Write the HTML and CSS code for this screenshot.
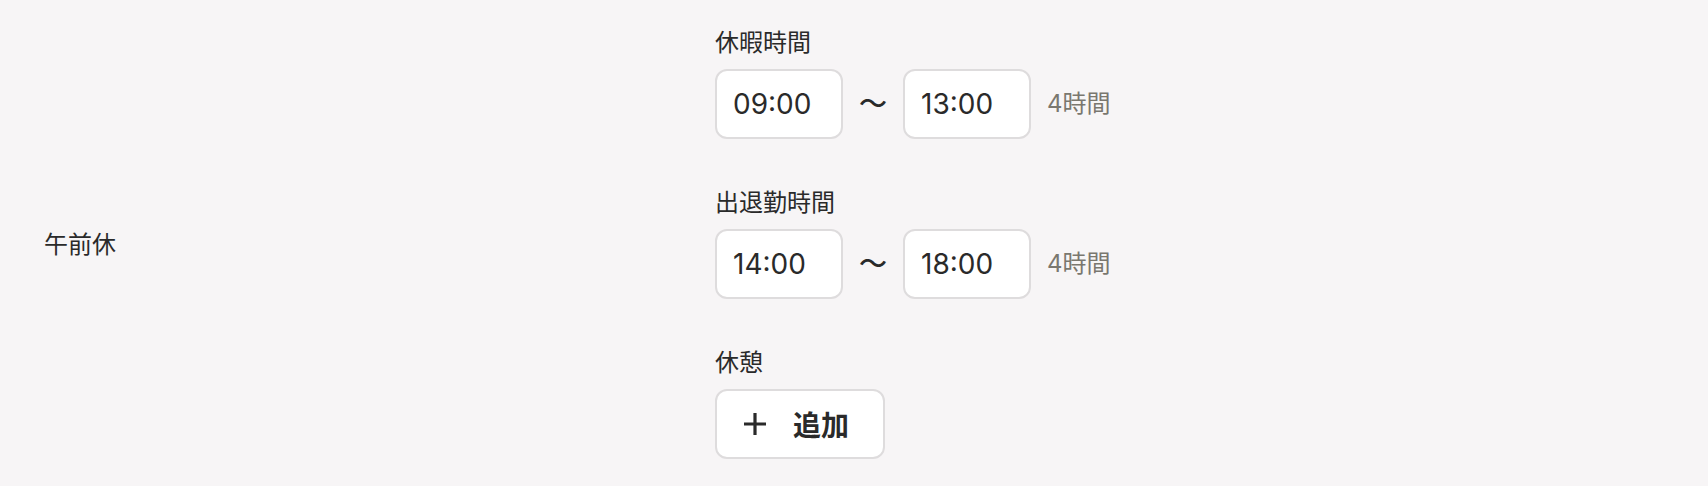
FILE: index.html
```html
<!DOCTYPE html>
<html lang="ja">
<head>
    <meta charset="UTF-8">
    <meta name="viewport" content="width=device-width, initial-scale=1.0">
    <title>午前休</title>
    <link rel="stylesheet" href="styles.css">
</head>
<body>

    <!-- 休暇の種類ごとの行 -->
    <div class="leave-row">
        <div class="leave-type">午前休</div>

        <div class="leave-fields">
            <!-- 休暇時間 -->
            <div class="field">
                <div class="field-label">休暇時間</div>
                <div class="time-range">
                    <div class="time-box">09:00</div>
                    <span class="tilde">〜</span>
                    <div class="time-box">13:00</div>
                    <span class="duration">4時間</span>
                </div>
            </div>

            <!-- 出退勤時間 -->
            <div class="field">
                <div class="field-label">出退勤時間</div>
                <div class="time-range">
                    <div class="time-box">14:00</div>
                    <span class="tilde">〜</span>
                    <div class="time-box">18:00</div>
                    <span class="duration">4時間</span>
                </div>
            </div>

            <!-- 休憩 -->
            <div class="field">
                <div class="field-label">休憩</div>
                <button class="add-button">
                    <svg class="plus-icon" width="24" height="24" viewBox="0 0 24 24" fill="none" stroke="currentColor" stroke-width="3.2">
                        <path d="M12 1v22M1 12h22"/>
                    </svg>
                    <span>追加</span>
                </button>
            </div>
        </div>
    </div>

</body>
</html>
```

FILE: styles.css
```css
body {
    font-family: Inter, "Noto Sans CJK JP", sans-serif;
    margin: 0;
    padding: 0;
    background-color: #f7f5f6;
    color: #2a2a2a;
}

/* 行全体 */
.leave-row {
    display: flex;
    align-items: center;
    padding: 25px 0 26px 44px;
}

.leave-type {
    width: 671px;
    margin-top: 6px;
    font-size: 24px;
    line-height: 36px;
}

/* 右側の入力欄 */
.leave-fields {
    display: flex;
    flex-direction: column;
    gap: 46px;
}

.field-label {
    font-size: 24px;
    line-height: 36px;
    margin-bottom: 8px;
}

.time-range {
    display: flex;
    align-items: center;
    gap: 16px;
}

.time-box {
    width: 128px;
    height: 70px;
    box-sizing: border-box;
    display: flex;
    align-items: center;
    padding: 0 16px;
    background-color: #fff;
    border: 2px solid #dedcdd;
    border-radius: 12px;
    font-size: 28px;
}

.tilde {
    font-size: 28px;
    line-height: 1;
    font-weight: 500;
}

.duration {
    font-size: 24px;
    line-height: 1;
    color: #7a776f;
}

/* 追加ボタン */
.add-button {
    display: flex;
    align-items: center;
    gap: 26px;
    height: 70px;
    padding: 0 34px 0 26px;
    background-color: #fff;
    border: 2px solid #dedcdd;
    border-radius: 12px;
    font-family: inherit;
    font-size: 28px;
    font-weight: bold;
    color: #2a2a2a;
    cursor: pointer;
}

.plus-icon {
    display: block;
}
```
